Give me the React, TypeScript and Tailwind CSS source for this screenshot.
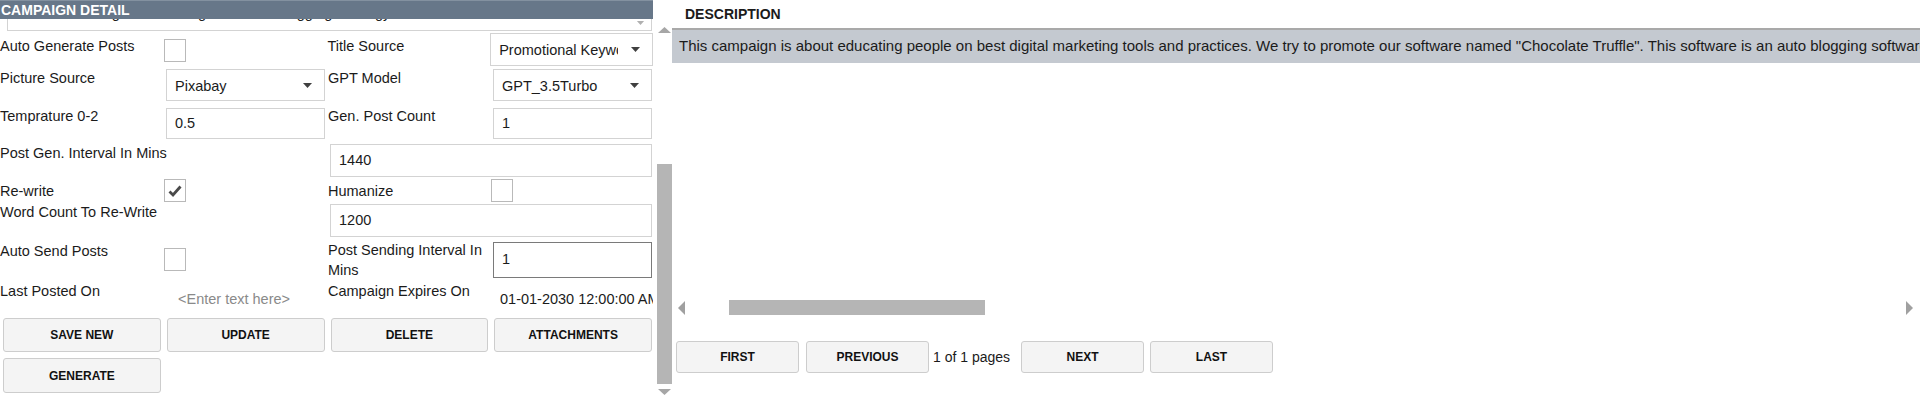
import React from "react";

const label = "text-[14.5px] leading-[20px] text-[#1b1b1b] whitespace-nowrap";
const box = "border border-[#d3d3d3] bg-white text-[14.5px] text-[#1b1b1b] flex items-center pl-[8px] overflow-hidden whitespace-nowrap";
const btn =
  "flex items-center justify-center rounded-[3px] border border-[#cdcdcd] bg-[#f4f4f4] text-[12px] font-bold text-[#111]";

function Caret() {
  return (
    <svg width="9" height="5" viewBox="0 0 9 5" className="shrink-0">
      <path d="M0 0 H9 L4.5 5 Z" fill="#404040" />
    </svg>
  );
}

function Select({ value, className }: { value: string; className: string }) {
  return (
    <div className={`${box} pr-[12px] ${className}`}>
      <span className="flex-1 overflow-hidden pt-[3px] mr-[13px]">{value}</span>
      <Caret />
    </div>
  );
}

function Check({ checked, className }: { checked?: boolean; className: string }) {
  return (
    <div className={`w-[22px] h-[23px] border border-[#b9b9b9] bg-white flex items-center justify-center ${className}`}>
      {checked && (
        <svg width="16" height="14" viewBox="0 0 16 14">
          <path d="M2.5 7.5 L6 11 L13.5 2.5" stroke="#4a4a4a" strokeWidth="2.8" fill="none" />
        </svg>
      )}
    </div>
  );
}

function Field() {
  return (
    <div className="w-[653px] shrink-0 flex flex-col">
      {/* header */}
      <div className="h-[19px] bg-[#677789] border-t border-[#8391a0] flex items-center pl-[1px]">
        <span className="text-[14px] font-bold text-white leading-[18px]">CAMPAIGN DETAIL</span>
      </div>

      {/* scrolled-away campaign select */}
      <div className="h-[12px] ml-[7px] w-[645px] border-x border-b border-[#d3d3d3] bg-white overflow-hidden flex items-start pr-[6px]">
        <span className="flex-1 mt-[-16px] pl-[90px] text-[14.5px] leading-[20px] text-[#1b1b1b] whitespace-nowrap">
          Digital Marketing Tools and Blogging Strategy
        </span>
        <svg width="9" height="4" viewBox="0 0 9 5" className="mt-[2px]">
          <path d="M0 0 H9 L4.5 5 Z" fill="#b0b0b0" />
        </svg>
      </div>

      {/* row 1 */}
      <div className="flex h-[35px]">
        <div className={`w-[164px] pt-[5px] ${label}`}>Auto Generate Posts</div>
        <div className="w-[164px]">
          <Check className="mt-[8px]" />
        </div>
        <div className={`w-[163px] pt-[5px] ${label}`}>Title Source</div>
        <Select value="Promotional Keywords" className="mt-[2px] h-[33px] w-[163px]" />
      </div>

      {/* row 2 */}
      <div className="flex h-[38px]">
        <div className={`w-[166px] pt-[2px] ${label}`}>Picture Source</div>
        <Select value="Pixabay" className="mt-[3px] h-[32px] w-[159px]" />
        <div className={`w-[168px] pl-[3px] pt-[2px] ${label}`}>GPT Model</div>
        <Select value="GPT_3.5Turbo" className="mt-[3px] h-[32px] w-[159px]" />
      </div>

      {/* row 3 */}
      <div className="flex h-[37px]">
        <div className={`w-[166px] pt-[2px] ${label}`}>Temprature 0-2</div>
        <div className={`${box} mt-[4px] h-[31px] w-[159px]`}>0.5</div>
        <div className={`w-[168px] pl-[3px] pt-[2px] ${label}`}>Gen. Post Count</div>
        <div className={`${box} mt-[4px] h-[31px] w-[159px]`}>1</div>
      </div>

      {/* row 4 */}
      <div className="flex h-[38px]">
        <div className={`w-[330px] pt-[2px] ${label}`}>Post Gen. Interval In Mins</div>
        <div className={`${box} mt-[3px] h-[33px] w-[322px]`}>1440</div>
      </div>

      {/* row 5 */}
      <div className="flex h-[22px]">
        <div className={`w-[164px] pt-[2px] ${label}`}>Re-write</div>
        <div className="w-[164px]">
          <Check checked className="" />
        </div>
        <div className={`w-[163px] pt-[2px] ${label}`}>Humanize</div>
        <Check className="" />
      </div>

      {/* row 6 */}
      <div className="flex h-[39px]">
        <div className={`w-[330px] pt-[1px] ${label}`}>Word Count To Re-Write</div>
        <div className={`${box} mt-[3px] h-[33px] w-[322px]`}>1200</div>
      </div>

      {/* row 7 */}
      <div className="flex h-[41px]">
        <div className={`w-[164px] pt-[1px] ${label}`}>Auto Send Posts</div>
        <div className="w-[164px]">
          <Check className="mt-[8px]" />
        </div>
        <div className={`w-[165px] text-[14.5px] leading-[20px] text-[#1b1b1b]`}>
          Post Sending Interval In
          <br />
          Mins
        </div>
        <div className="mt-[2px] h-[36px] w-[159px] border border-[#7a7a7a] bg-white flex items-center pl-[8px] text-[14.5px] text-[#1b1b1b]">
          1
        </div>
      </div>

      {/* row 8 */}
      <div className="flex h-[32px]">
        <div className={`w-[164px] ${label}`}>Last Posted On</div>
        <div className="w-[164px] pt-[8px] pl-[14px] text-[14.5px] leading-[20px] text-[#8a8a8a] whitespace-nowrap">
          &lt;Enter text here&gt;
        </div>
        <div className={`w-[163px] ${label}`}>Campaign Expires On</div>
        <div className="w-[162px] overflow-hidden pt-[8px] pl-[9px] text-[14.5px] leading-[20px] text-[#1b1b1b] whitespace-nowrap">
          01-01-2030 12:00:00 AM
        </div>
      </div>

      {/* buttons */}
      <div className="grid grid-cols-4 gap-[6px] pl-[3px] w-[652px] mt-[5px]">
        <button className={`${btn} h-[34px]`}>SAVE NEW</button>
        <button className={`${btn} h-[34px]`}>UPDATE</button>
        <button className={`${btn} h-[34px]`}>DELETE</button>
        <button className={`${btn} h-[34px]`}>ATTACHMENTS</button>
        <button className={`${btn} h-[35px]`}>GENERATE</button>
      </div>
    </div>
  );
}

function VScroll() {
  return (
    <div className="w-[19px] shrink-0 flex flex-col items-center pt-[27px] pl-[4px]">
      <svg width="13" height="6" viewBox="0 0 13 6">
        <path d="M0 6 L6.5 0 L13 6 Z" fill="#a6a6a6" />
      </svg>
      <div className="flex-1" />
      <div className="w-[15px] h-[220px] bg-[#b5b5b5]" />
      <svg width="13" height="6" viewBox="0 0 13 6" className="mt-[5px] mb-[4px]">
        <path d="M0 0 L13 0 L6.5 6 Z" fill="#a6a6a6" />
      </svg>
    </div>
  );
}

function Description() {
  const pager = "w-[123px] h-[32px] " + btn;
  return (
    <div className="flex-1 min-w-0 flex flex-col overflow-hidden">
      <div className="h-[28px] pl-[13px] flex items-center">
        <span className="text-[14px] font-semibold text-[#1b1b1b]">DESCRIPTION</span>
      </div>
      <div className="h-[35px] border-t-2 border-[#a9a9a9] bg-[#c4c9d0] pl-[7px] flex items-center overflow-hidden">
        <span className="text-[15px] text-[#1b1b1b] whitespace-nowrap">
          This campaign is about educating people on best digital marketing tools and practices. We try to promote our
          software named "Chocolate Truffle". This software is an auto blogging software that writes and publishes posts.
        </span>
      </div>
      <div className="h-[237px]" />
      <div className="h-[15px] flex items-center pl-[6px] pr-[7px]">
        <svg width="7" height="14" viewBox="0 0 7 14">
          <path d="M7 0 L0 7 L7 14 Z" fill="#a0a0a0" />
        </svg>
        <div className="ml-[44px] w-[256px] h-[15px] bg-[#b5b5b5]" />
        <div className="flex-1" />
        <svg width="7" height="14" viewBox="0 0 7 14">
          <path d="M0 0 L7 7 L0 14 Z" fill="#a0a0a0" />
        </svg>
      </div>
      <div className="flex items-center mt-[26px] pl-[4px]">
        <button className={pager}>FIRST</button>
        <button className={`${pager} ml-[7px]`}>PREVIOUS</button>
        <span className="ml-[4px] w-[88px] text-[14px] text-[#1b1b1b] whitespace-nowrap">1 of 1 pages</span>
        <button className={pager}>NEXT</button>
        <button className={`${pager} ml-[6px]`}>LAST</button>
      </div>
    </div>
  );
}

export default function App() {
  return (
    <div className="w-[1920px] h-[399px] bg-white flex overflow-hidden font-['Liberation_Sans',Arial,sans-serif]">
      <Field />
      <VScroll />
      <Description />
    </div>
  );
}
